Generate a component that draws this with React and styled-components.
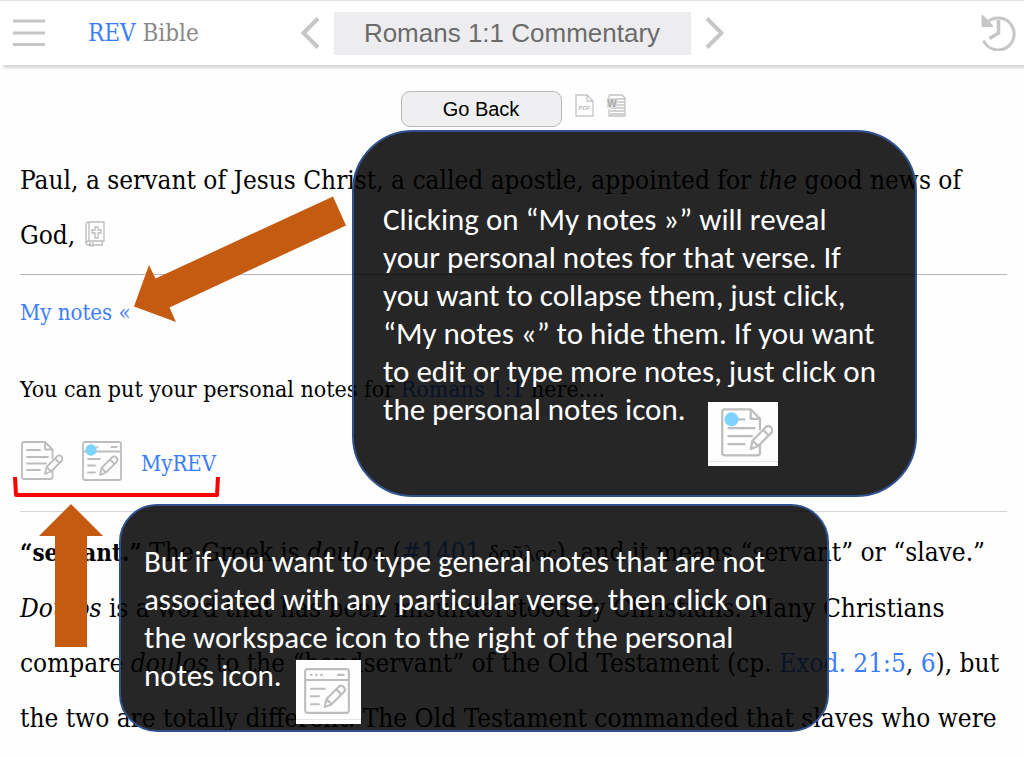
import React from "react";
import styled, { createGlobalStyle } from "styled-components";

const serif = '"DejaVu Serif Condensed", "DejaVu Serif", serif';
const sans = '"Liberation Sans", Arial, sans-serif';
const humanist = 'Carlito, Calibri, "Open Sans", "Noto Sans", sans-serif';
const blue = "#3b7dff";

const GlobalStyle = createGlobalStyle`
  *, *::before, *::after { box-sizing: border-box; }
  body { margin: 0; background: #fefefe; color: #000; font-family: ${serif}; overflow-x: hidden; }
  button { font: inherit; color: inherit; cursor: pointer; }
`;

const Page = styled.div`
  position: relative;
  padding-bottom: 12px;
`;

const Header = styled.header`
  display: grid;
  grid-template-columns: 1fr auto 1fr;
  align-items: center;
  height: 65px;
  padding: 0 8px;
  background: #fff;
  border-top: 1px solid #e2e2e2;
  box-shadow: 3px 3px 3px #d3d6d6;
`;

const HeaderSide = styled.div`
  display: flex;
  align-items: center;
  justify-content: ${(p) => (p.$end ? "flex-end" : "flex-start")};
  gap: 43px;
  padding-left: 5px;
`;

const IconButton = styled.button`
  display: flex;
  padding: 0;
  border: 0;
  background: none;
`;

const Brand = styled.a`
  color: #888;
  font-size: 24px;
  line-height: 32px;
  text-decoration: none;
  white-space: nowrap;
  span { color: ${blue}; }
`;

const Passage = styled.nav`
  display: flex;
  align-items: center;
  gap: 14px;
`;

const PassageTitle = styled.button`
  width: 357px;
  height: 43px;
  padding: 0;
  border: 0;
  background: #ededef;
  color: #6b6b6b;
  font-family: ${sans};
  font-size: 26px;
  white-space: nowrap;
`;

const Toolbar = styled.div`
  display: flex;
  justify-content: center;
  align-items: center;
  gap: 13px;
  padding: 26px 0 0 2px;
`;

const BackButton = styled.button`
  width: 161px;
  height: 36px;
  padding: 0;
  border: 1px solid #b9b9b9;
  border-radius: 9px;
  background: #efeff1;
  font-family: ${sans};
  font-size: 20px;
`;

const ExportButton = styled(IconButton)`
  margin-bottom: 8px;
`;

const Article = styled.main`
  padding: 26px 17px 0 20px;
`;

const Passages = styled.p`
  margin: 0;
  font-size: 26px;
  line-height: 55px;
  white-space: nowrap;
`;

const Term = styled.b`
  font-size: 24px;
`;

const Greek = styled.span`
  font-family: "Liberation Serif", "Times New Roman", serif;
  font-size: 24px;
`;

const Rule = styled.hr`
  height: 1px;
  margin: ${(p) => (p.$wide ? "30px 0 13px" : "11px 0 20px")};
  border: 0;
  background: ${(p) => (p.$wide ? "#d4d6d6" : "#b8b8b8")};
`;

const Link = styled.a`
  color: ${blue};
  text-decoration: none;
`;

const Notes = styled.section`
  font-size: 22px;
  line-height: 36px;
  p { margin: 0; }
`;

const NoteText = styled.p`
  && { margin: 40px 0 33px; }
  font-size: 23px;
  white-space: nowrap;
`;

const NoteTools = styled.div`
  display: flex;
  align-items: center;
  gap: 19px;
  height: 41px;
  padding-left: 1px;
  a { padding-top: 6px; }
`;

const InlineIcon = styled.span`
  margin-left: 2px;
  svg { vertical-align: -3px; }
`;

const Callout = styled.aside`
  position: absolute;
  border: 2px solid #2f528f;
  background: rgba(0, 0, 0, 0.85);
  color: #fff;
  font-family: ${humanist};
  font-size: 31px;
  font-variant-ligatures: none;
  line-height: 38px;
  white-space: nowrap;
  p { margin: 0; }
`;

const NotesCallout = styled(Callout)`
  top: 130px;
  left: 352px;
  width: 565px;
  height: 367px;
  padding: 68px 29px;
  border-radius: 61px;
`;

const WorkspaceCallout = styled(Callout)`
  top: 504px;
  left: 119px;
  width: 710px;
  height: 228px;
  padding: 36px 23px;
  border-radius: 38px;
`;

const Tile = styled.span`
  display: inline-flex;
  align-items: center;
  justify-content: center;
  width: ${(p) => (p.$large ? 70 : 65)}px;
  height: 64px;
  margin: ${(p) => (p.$large ? "12px 0 0 22px" : "4px 0 0 14px")};
  padding: ${(p) => (p.$large ? "0 0 2px 8px" : "0 3px 2px 0")};
  background: #fefefe;
  box-shadow: inset 0 -4px #fefefe, inset 0 -5px #e4e4e4;
  vertical-align: top;
`;

const Annotation = styled.svg`
  position: absolute;
  top: ${(p) => p.$top}px;
  left: ${(p) => p.$left}px;
  overflow: visible;
  pointer-events: none;
`;

function MenuIcon() {
  return (
    <svg width="32" height="28" viewBox="0 0 32 28" stroke="#c6c6c6" strokeWidth="3">
      <path d="M0 2h32M0 14h32M0 25.500h32" />
    </svg>
  );
}

function Chevron({ right }) {
  return (
    <svg width="19" height="32" viewBox="0 0 19 32" fill="none" stroke="#c6c6c6" strokeWidth="4">
      <path d={right ? "M2 1.500L16.500 16L2 30.500" : "M17 1.500L2.500 16L17 30.500"} />
    </svg>
  );
}

function HistoryIcon() {
  return (
    <svg width="35" height="36" viewBox="0 0 35 36" fill="none" stroke="#c6c6c6">
      <path d="M6.500 7A16 16 0 1 1 2.500 25.500" strokeWidth="3" />
      <path d="M1 0L5 3.500L8 6.500L12 11.500H1Z" fill="#c6c6c6" strokeWidth="1" />
      <path d="M17.500 5v13L8.500 23.500" strokeWidth="3.500" />
    </svg>
  );
}

function PdfIcon() {
  return (
    <svg width="19" height="23" viewBox="0 0 19 23" fill="none" stroke="#c6c6c6" strokeWidth="1.300">
      <path d="M1 1h11l6 6v15H1ZM12 1v6h6" />
      <text x="9.500" y="16" textAnchor="middle" fontFamily={sans} fontSize="6" fontWeight="700" fill="#c0c0c0" stroke="none">PDF</text>
    </svg>
  );
}

function WordIcon() {
  return (
    <svg width="19" height="23" viewBox="0 0 19 23" fill="none" stroke="#c4c4c4" strokeWidth="1.300">
      <path d="M2 4V2q0-1 1-1h12l3 3v18H2v-7M10 5h8M10 8h8M10 11h8M3 14h15M3 17h15M3 20h15" />
      <path d="M0 4h10v10H0Z" fill="#dedede" stroke="none" />
      <text x="5" y="12.500" textAnchor="middle" fontFamily={sans} fontSize="10" fontWeight="700" fill="#a9a9a9" stroke="none">W</text>
    </svg>
  );
}

function BibleIcon() {
  return (
    <svg width="20" height="26" viewBox="0 0 20 26" fill="none" stroke="#bcbcbc" strokeWidth="1.300">
      <path d="M4 1h15v19H4a3 3 0 0 0-3 2V4q0-3 3-3ZM4 1v19M1 22q0 2 3 2h2M8 24h10M17 20v4M5 21v4l1.500-1L8 25v-4" />
      <path d="M10 6h3v3h3v3h-3v5h-3v-5H7V9h3Z" />
    </svg>
  );
}

function NotesIcon({ dot, width = 42, height = 40 }) {
  return (
    <svg width={width} height={height} viewBox="0 0 42 40" fill="none" stroke="#bdbdbd" strokeWidth="1.800" strokeLinecap="round" strokeLinejoin="round">
      <path d="M31.500 29v7q0 2-2 2H3q-2 0-2-2V3q0-2 2-2h21l7.500 7.500V17M24 1v7.500h7.500" />
      <path d="M6 9h13M6 16h21M6 22.500h19M6 29h13" />
      <path d="M24 33l1.500-7L36.500 15q2-1.500 4 .5t.5 4L30 30.500ZM25.500 26l4.500 4.500M34 17.500l4.500 4.500" />
      {dot && <circle cx="8.500" cy="9" r="5.700" fill="#7dd3fc" stroke="none" />}
    </svg>
  );
}

function WorkspaceIcon({ dot, size = 40 }) {
  return (
    <svg width={size} height={size} viewBox="0 0 40 40" fill="none" stroke="#bdbdbd" strokeWidth="1.800" strokeLinecap="round" strokeLinejoin="round">
      <rect x="1" y="1" width="38" height="38" rx="2" />
      <path d="M1 10.500h38M6 6h.5M10.500 6h.5M15 6h.5M29.500 6h5M6 18h12M6 24.500h7M6 31.500h7" />
      <path d="M18 34l1.500-7L30.500 16q2-1.500 4 .5t.5 4L24 31.500ZM19.500 27l4.500 4.500M28 18.500l4.500 4.500" />
      {dot && <circle cx="9" cy="9" r="5.700" fill="#7dd3fc" stroke="none" />}
    </svg>
  );
}

export default function App() {
  return (
    <Page>
      <GlobalStyle />
      <Header>
        <HeaderSide>
          <IconButton aria-label="Menu"><MenuIcon /></IconButton>
          <Brand href="#home"><span>REV</span> Bible</Brand>
        </HeaderSide>
        <Passage aria-label="Passage">
          <IconButton aria-label="Previous verse"><Chevron /></IconButton>
          <PassageTitle>Romans 1:1 Commentary</PassageTitle>
          <IconButton aria-label="Next verse"><Chevron right /></IconButton>
        </Passage>
        <HeaderSide $end>
          <IconButton aria-label="History"><HistoryIcon /></IconButton>
        </HeaderSide>
      </Header>

      <Toolbar>
        <BackButton>Go Back</BackButton>
        <ExportButton aria-label="Export PDF"><PdfIcon /></ExportButton>
        <ExportButton aria-label="Export Word"><WordIcon /></ExportButton>
      </Toolbar>

      <Article>
        <Passages>
          Paul, a servant of Jesus Christ, a called apostle, appointed for <i>the</i> good news of<br />
          God, <InlineIcon><BibleIcon /></InlineIcon>
        </Passages>
        <Rule />
        <Notes>
          <p><Link href="#notes">My notes «</Link></p>
          <NoteText>
            You can put your personal notes for <Link href="#romans-1-1">Romans 1:1</Link> here....
          </NoteText>
          <NoteTools>
            <IconButton aria-label="Personal notes"><NotesIcon /></IconButton>
            <IconButton aria-label="Workspace"><WorkspaceIcon dot /></IconButton>
            <Link href="#myrev">MyREV</Link>
          </NoteTools>
        </Notes>
        <Rule $wide />
        <Passages>
          <Term>“servant.”</Term> The Greek is <i>doulos</i> (<Link href="#1401">#1401</Link> <Greek>δοῦλος</Greek>), and it means “servant” or “slave.”<br />
          <i>Doulos</i> is a word that has been misunderstood by Christians. Many Christians<br />
          compare <i>doulos</i> to the “bondservant” of the Old Testament (cp. <Link href="#exod-21-5">Exod. 21:5</Link>, <Link href="#exod-21-6">6</Link>), but<br />
          the two are totally different. The Old Testament commanded that slaves who were
        </Passages>
      </Article>

      <NotesCallout>
        <p>
          Clicking on “My notes »” will reveal<br />
          your personal notes for that verse. If<br />
          you want to collapse them, just click,<br />
          “My notes «” to hide them. If you want<br />
          to edit or type more notes, just click on<br />
          the personal notes icon.<Tile $large><NotesIcon dot width={52} height={50} /></Tile>
        </p>
      </NotesCallout>
      <WorkspaceCallout>
        <p>
          But if you want to type general notes that are not<br />
          associated with any particular verse, then click on<br />
          the workspace icon to the right of the personal<br />
          notes icon.<Tile><WorkspaceIcon size={46} /></Tile>
        </p>
      </WorkspaceCallout>

      <Annotation $top={196} $left={134} width="212" height="126" viewBox="0 0 212 126" fill="#c55a11" aria-hidden="true">
        <path d="M0 110.500L15 69L21.500 82.500L199 0.500L212 29.500L35.500 111.500L42 126Z" />
      </Annotation>
      <Annotation $top={477} $left={13} width="208" height="20" viewBox="0 0 208 20" fill="none" stroke="#fe0000" strokeWidth="4" strokeLinejoin="round" aria-hidden="true">
        <path d="M2 0L3 18H204L205 0" />
      </Annotation>
      <Annotation $top={504} $left={39} width="64" height="143" viewBox="0 0 64 143" fill="#c55a11" aria-hidden="true">
        <path d="M32 0L64 32H48V143H16V32H0Z" />
      </Annotation>
    </Page>
  );
}
